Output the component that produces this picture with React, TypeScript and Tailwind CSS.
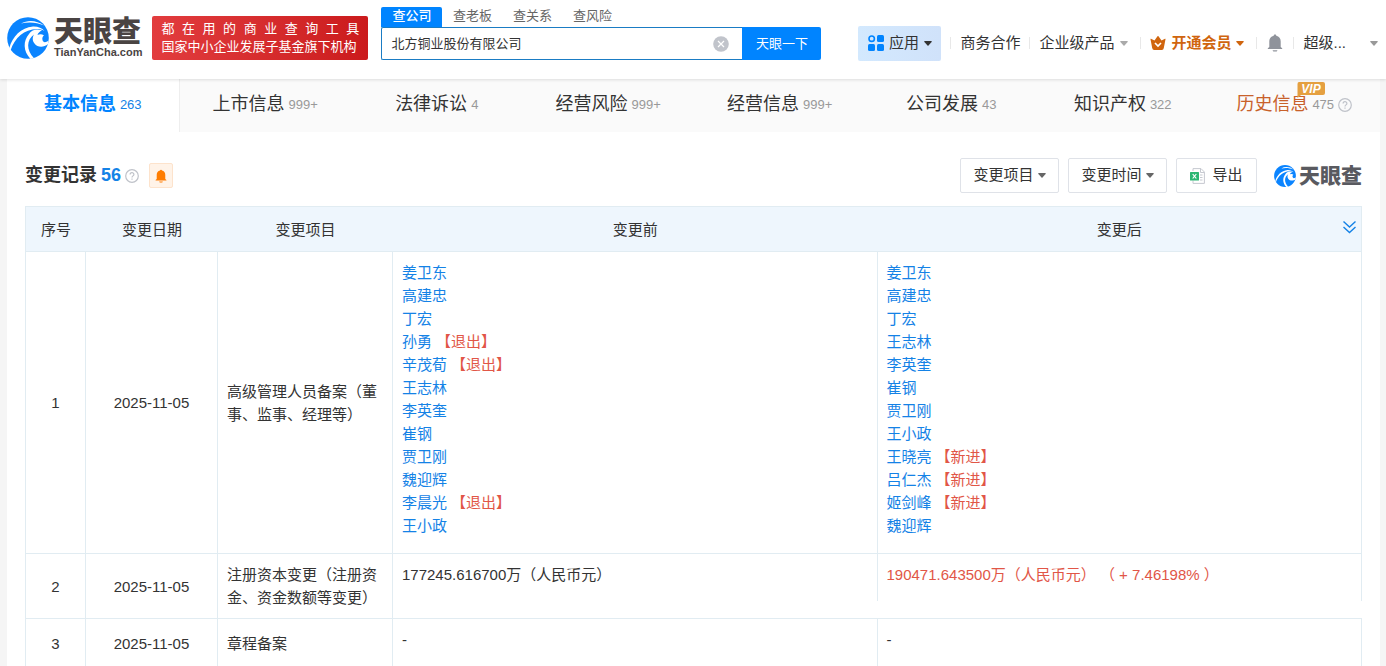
import React from "react";

const FONT = "font-['Liberation_Sans','Noto_Sans_CJK_SC',sans-serif]";

function LogoMark({ className }: { className: string }) {
  return (
    <svg viewBox="0 0 42 42" className={className} aria-hidden="true">
      <circle cx="21" cy="21" r="20.8" fill="#0a84ff" />
      <g fill="#fff">
        <path d="M30 12C17 12.500 8 20.500 3.500 33.500L2.300 31C5.500 19.500 14 10.500 26 9.500C31 9.300 35 11 37.500 14C35 12.500 33 12 30 12Z" />
        <path d="M14 6.500C21 2.500 30 3.200 37 8.500C30 5.300 21.500 4.800 14 6.500Z" />
        <path d="M22 17C24 13 30 11 35 13.500C32.500 14.500 31 16 30.500 18C32.500 17 35 17 37 18.500C35.500 19.500 35 21 35.500 23C36 25.500 38.500 26 41.600 23.500L41 27C36.500 31 30.500 30.500 27.500 26.500C25 23.500 25.500 20 27 17.500C19.500 23 19 33 27 41.300L23.500 41.900C16 34 16 24 22 17Z" />
      </g>
    </svg>
  );
}

function Caret({ className }: { className: string }) {
  return (
    <svg viewBox="0 0 8 5" className={`h-[5px] w-2 shrink-0 ${className}`} aria-hidden="true">
      <path d="M0.500 0H7.500Q8 0.300 7.600 0.900L4.500 4.600Q4 5 3.500 4.600L0.400 0.900Q0 0.300 0.500 0Z" fill="currentColor" />
    </svg>
  );
}

function Help() {
  return (
    <svg viewBox="0 0 14 14" className="h-[14px] w-[14px] shrink-0" fill="none" stroke="#bfc2c9" strokeWidth="1.200" aria-hidden="true">
      <circle cx="7" cy="7" r="6.300" />
      <path d="M5.100 5.600C5.100 3 8.900 3 8.900 5.500C8.900 6.900 7 6.900 7 8.400" />
      <path d="M7 9.500V10.700" />
    </svg>
  );
}

function Bell({ className }: { className: string }) {
  return (
    <svg viewBox="0 0 16 18" className={className} fill="currentColor" aria-hidden="true">
      <path d="M8 0.500C8.800 0.500 9.300 1 9.300 1.800C12.100 2.400 13.700 4.500 13.700 7.300V13L15.200 14.200V15H0.800V14.200L2.300 13V7.300C2.300 4.500 3.900 2.400 6.700 1.800C6.700 1 7.200 0.500 8 0.500Z" />
      <path d="M5.500 16.200H10.500L9.700 17.500H6.300Z" />
    </svg>
  );
}

const searchKinds = ["查公司", "查老板", "查关系", "查风险"];

const tabs = [
  { label: "基本信息", count: "263" },
  { label: "上市信息", count: "999+" },
  { label: "法律诉讼", count: "4" },
  { label: "经营风险", count: "999+" },
  { label: "经营信息", count: "999+" },
  { label: "公司发展", count: "43" },
  { label: "知识产权", count: "322" },
];

type Person = { name: string; mark?: string };

const before: Person[] = [
  { name: "姜卫东" },
  { name: "高建忠" },
  { name: "丁宏" },
  { name: "孙勇", mark: "【退出】" },
  { name: "辛茂荀", mark: "【退出】" },
  { name: "王志林" },
  { name: "李英奎" },
  { name: "崔钢" },
  { name: "贾卫刚" },
  { name: "魏迎辉" },
  { name: "李晨光", mark: "【退出】" },
  { name: "王小政" },
];

const after: Person[] = [
  { name: "姜卫东" },
  { name: "高建忠" },
  { name: "丁宏" },
  { name: "王志林" },
  { name: "李英奎" },
  { name: "崔钢" },
  { name: "贾卫刚" },
  { name: "王小政" },
  { name: "王晓亮", mark: "【新进】" },
  { name: "吕仁杰", mark: "【新进】" },
  { name: "姬剑峰", mark: "【新进】" },
  { name: "魏迎辉" },
];

function People({ list }: { list: Person[] }) {
  return (
    <ul>
      {list.map((p) => (
        <li key={p.name}>
          <a href="#" className="text-[#1482e6]">{p.name}</a>
          {p.mark && <span className="ml-1 text-[#e15647]">{p.mark}</span>}
        </li>
      ))}
    </ul>
  );
}

function Divider() {
  return <span className="h-3 w-px shrink-0 bg-[#e8e8e8]" />;
}

function Header() {
  return (
    <header className="relative z-10 flex h-[79px] shrink-0 items-start bg-white pl-[7px] pr-2 shadow-[0_1px_3px_rgba(0,0,0,0.12)]">
      <a href="#" className="flex items-center gap-[5px] pt-[17px]">
        <LogoMark className="h-[42px] w-[42px]" />
        <span className="flex flex-col">
          <span className="text-[29px] font-black leading-[28px] text-[#4a4443]">天眼查</span>
          <span className="text-[11px] font-bold leading-3 text-[#4a4443]">TianYanCha.com</span>
        </span>
      </a>
      <div className="ml-[10px] mt-4 flex h-[44px] w-[216px] shrink-0 flex-col justify-center rounded-xs bg-linear-to-r from-[#e23c3e] to-[#cb1a1c] px-[9px] text-white">
        <p className="flex justify-between text-[13px] leading-[18px]">
          {"都在用的商业查询工具".split("").map((c) => (
            <span key={c}>{c}</span>
          ))}
        </p>
        <p className="whitespace-nowrap text-[13px] leading-[18px]">国家中小企业发展子基金旗下机构</p>
      </div>
      <form className="ml-[13px] mt-[7px] w-[440px] shrink-0" onSubmit={(e) => e.preventDefault()}>
        <div className="flex h-5 text-[13px] leading-[18px] text-[#666]">
          {searchKinds.map((k, i) => (
            <button
              key={k}
              type="button"
              className={i === 0 ? "w-[61px] rounded-t-xs bg-[#0084ff] pb-[2px] font-medium text-white" : "w-[60px] pb-[2px]"}
            >
              {k}
            </button>
          ))}
        </div>
        <div className="flex h-[33px]">
          <div className="flex flex-1 items-center rounded-l-xs border border-r-0 border-[#1a7cc4] pl-[9px] pr-[13px]">
            <input
              aria-label="搜索公司"
              defaultValue="北方铜业股份有限公司"
              className="min-w-0 flex-1 bg-transparent text-[13px] text-[#333] outline-none"
            />
            <button type="button" aria-label="清空">
              <svg viewBox="0 0 16 16" className="h-4 w-4">
                <circle cx="8" cy="8" r="7.800" fill="#c1c4cb" />
                <path d="M5 5L11 11M11 5L5 11" stroke="#fff" strokeWidth="1.200" />
              </svg>
            </button>
          </div>
          <button type="submit" className="w-[79px] rounded-r-xs bg-[#0084ff] text-[13px] text-white">天眼一下</button>
        </div>
      </form>
      <nav className="ml-auto mt-[26px] flex h-[35px] items-center whitespace-nowrap pb-px text-[15px] text-[#333]">
        <button className="flex h-[35px] w-[83px] items-center justify-center gap-[5px] rounded-xs bg-linear-to-r from-[#d3e9fe] to-[#d0e2fa]">
          <svg viewBox="0 0 16 16" className="h-4 w-4" fill="#0084ff" aria-hidden="true">
            <circle cx="3.700" cy="3.700" r="2.700" fill="none" stroke="#0084ff" strokeWidth="1.600" />
            <rect x="9" width="7" height="7" rx="1.500" />
            <rect y="9" width="7" height="7" rx="1.500" />
            <rect x="9" y="9" width="7" height="7" rx="1.500" />
          </svg>
          应用
          <Caret className="text-[#333]" />
        </button>
        <span className="w-[9px]" />
        <Divider />
        <a href="#" className="px-[9px]">商务合作</a>
        <Divider />
        <button className="flex items-center gap-[6px] px-[9px]">
          企业级产品
          <Caret className="text-[#aaa]" />
        </button>
        <span className="w-[3px]" />
        <Divider />
        <button className="flex items-center gap-[5px] px-[9px] font-bold text-[#d0650e]">
          <svg viewBox="0 0 16 14" className="h-[14px] w-4" aria-hidden="true">
            <path d="M0.500 3.200Q0.300 2.500 1 2.800L4.500 4.500L7.500 0.300Q8 -0.200 8.500 0.300L11.500 4.500L15 2.800Q15.700 2.500 15.500 3.200L13.800 12Q13.500 14 11.800 14H4.200Q2.500 14 2.200 12Z" fill="currentColor" />
            <path d="M5 7L8 10L11 7" fill="none" stroke="#fff" strokeWidth="1.700" />
          </svg>
          开通会员
          <Caret className="" />
        </button>
        <span className="w-[3px]" />
        <Divider />
        <button aria-label="消息" className="px-[10px]">
          <Bell className="h-[18px] w-4 text-[#8f939b]" />
        </button>
        <Divider />
        <button className="flex items-center gap-6 pl-[9px]">
          超级...
          <Caret className="text-[#999]" />
        </button>
      </nav>
    </header>
  );
}

function TabBar() {
  return (
    <nav className="flex h-[53px] bg-[#fafafa]">
      {tabs.map((t, i) => (
        <a
          key={t.label}
          href="#"
          className={
            "flex flex-1 items-center justify-center gap-1 pb-[2px] text-[18px] " +
            (i === 0 ? "border-r border-[#eee] bg-white font-bold text-[#0084ff]" : "text-[#333]")
          }
        >
          {t.label}
          <span className={"pt-px text-[13px] font-normal " + (i === 0 ? "text-[#1482e6]" : "text-[#999]")}>{t.count}</span>
        </a>
      ))}
      <a href="#" className="flex flex-1 items-center justify-center gap-1 pb-[2px] text-[18px] text-[#c8612a]">
        <span className="relative">
          历史信息
          <svg viewBox="0 0 28 16" className="absolute -top-[9px] left-[61px] h-4 w-7" aria-hidden="true">
            <path d="M2 0H26Q28 0 28 2V11Q28 13 26 13H4L0.500 16V2Q0.500 0 2 0Z" fill="#e5a040" />
            <text x="14" y="10.800" textAnchor="middle" fontSize="12" fontWeight="bold" fontStyle="italic" fill="#fff">VIP</text>
          </svg>
        </span>
        <span className="pt-px text-[13px] text-[#999]">475</span>
        <Help />
      </a>
    </nav>
  );
}

function SectionBar() {
  const box = "flex h-[35px] items-center justify-center rounded-xs border border-[#dfe2e8] bg-white text-[15px] text-[#333]";
  return (
    <div className="mt-[26px] flex h-[35px] items-center">
      <h2 className="text-[18px] font-bold text-[#333]">变更记录</h2>
      <span className="ml-1 text-[18px] font-bold text-[#1482e6]">56</span>
      <span className="ml-1">
        <Help />
      </span>
      <button aria-label="监控" className="ml-[10px] flex h-[25px] w-6 items-center justify-center rounded-xs border border-[#fde3cc] bg-[#fff3e8]">
        <Bell className="h-[14px] w-3 text-[#ff7d00]" />
      </button>
      <div className="ml-auto flex items-center gap-[9px]">
        <button className={`${box} w-[99px] gap-1`}>
          变更项目
          <Caret className="text-[#666]" />
        </button>
        <button className={`${box} w-[99px] gap-1`}>
          变更时间
          <Caret className="text-[#666]" />
        </button>
        <button className={`${box} w-[81px] gap-[7px]`}>
          <svg viewBox="0 0 15 16" className="h-4 w-[15px]" aria-hidden="true">
            <path d="M3 3V0.600H11L14.400 4V15.400H3V12.500" fill="#fff" stroke="#c6c9d0" />
            <path d="M10.500 1V4.500H14M10 7H12.500M10 9.500H12.500M10 12H12.500" fill="none" stroke="#c6c9d0" />
            <rect y="4" width="9" height="8.500" rx="0.500" fill="#2bb673" />
            <path d="M2.700 6L6.300 10.500M6.300 6L2.700 10.500" stroke="#fff" strokeWidth="1.200" />
          </svg>
          导出
        </button>
        <span className="ml-2 flex items-center gap-[3px] text-[21px] font-black leading-[22px] text-[#595a60]">
          <LogoMark className="h-[22px] w-[22px]" />
          天眼查
        </span>
      </div>
    </div>
  );
}

const cell = "border-b border-r border-[#e1ecf2]";
const valueCell = cell + " px-[9px] pt-[9px] pb-4 align-top";
const itemCell = cell + " px-[9px] py-[9px]";

function ChangeTable() {
  return (
    <table className="mt-[13px] w-full table-fixed border-separate border-spacing-0 border-l border-t border-[#e1ecf2] text-[15px] leading-[23px] text-[#333]">
      <colgroup>
        <col className="w-[60px]" />
        <col className="w-[132px]" />
        <col className="w-[175px]" />
        <col />
        <col />
      </colgroup>
      <thead>
        <tr className="h-[45px] bg-[#eef6fd]">
          {["序号", "变更日期", "变更项目", "变更前"].map((h) => (
            <th key={h} className="border-b border-[#e1ecf2] font-normal">{h}</th>
          ))}
          <th className="relative border-b border-r border-[#e1ecf2] font-normal">
            变更后
            <button aria-label="展开" className="absolute right-1 top-3">
              <svg viewBox="0 0 15 15" className="h-[15px] w-[15px]" fill="none" stroke="#1482e6" strokeWidth="1.400">
                <path d="M1.500 2.500L7.500 8L13.500 2.500M1.500 8L7.500 13.500L13.500 8" />
              </svg>
            </button>
          </th>
        </tr>
      </thead>
      <tbody>
        <tr>
          <td className={`${cell} text-center`}>1</td>
          <td className={`${cell} text-center`}>2025-11-05</td>
          <td className={itemCell}>高级管理人员备案（董事、监事、经理等）</td>
          <td className={valueCell}>
            <People list={before} />
          </td>
          <td className={valueCell}>
            <People list={after} />
          </td>
        </tr>
        <tr>
          <td className={`${cell} text-center`}>2</td>
          <td className={`${cell} text-center`}>2025-11-05</td>
          <td className={itemCell}>注册资本变更（注册资金、资金数额等变更）</td>
          <td className={valueCell}>177245.616700万（人民币元）</td>
          <td className={`${valueCell} relative text-[#e15647]`}>
            190471.643500万（人民币元） （ + 7.46198% ）
            <span className="absolute -left-px -right-px bottom-0 h-[17px] bg-white" />
          </td>
        </tr>
        <tr>
          <td className={`${cell} text-center`}>3</td>
          <td className={`${cell} text-center`}>2025-11-05</td>
          <td className={itemCell}>章程备案</td>
          <td className={valueCell}>-</td>
          <td className={valueCell}>-</td>
        </tr>
      </tbody>
    </table>
  );
}

export default function App() {
  return (
    <div className={`flex h-screen flex-col overflow-hidden bg-[#f5f5f5] ${FONT}`}>
      <Header />
      <main className="ml-[7px] mr-[6px] flex-1 bg-white">
        <TabBar />
        <section className="pl-[18px] pr-[18px]">
          <SectionBar />
          <ChangeTable />
        </section>
      </main>
    </div>
  );
}
